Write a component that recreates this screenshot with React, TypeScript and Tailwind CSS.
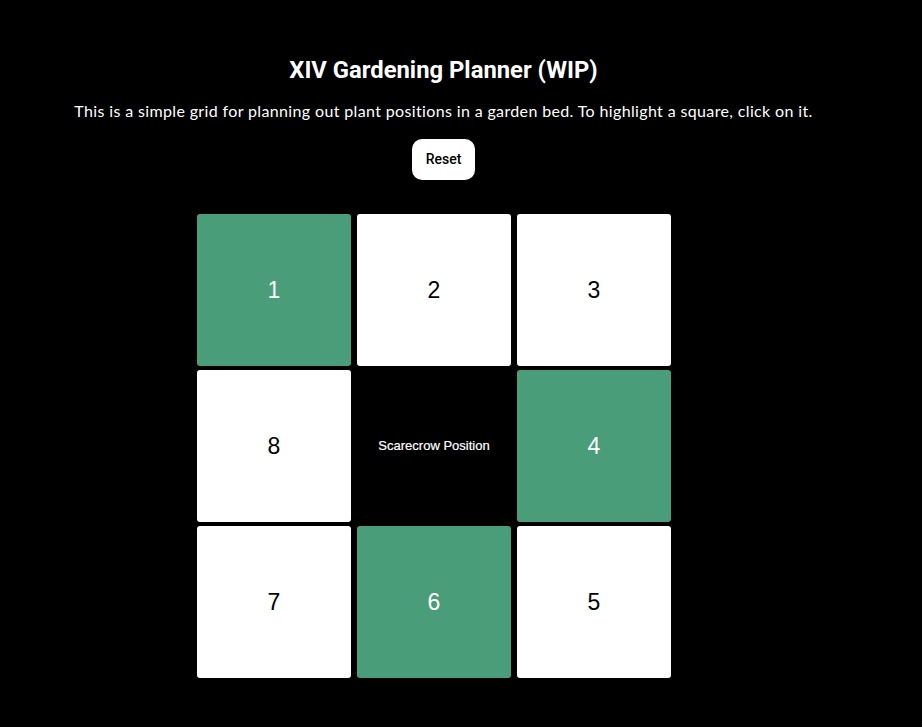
import React, { useState } from 'react';

// cell ids laid out clockwise around the scarecrow
const layout: (number | null)[] = [1, 2, 3, 8, null, 4, 7, 6, 5];
const initialOn = [1, 4, 6];

export default function App() {
  const [active, setActive] = useState<number[]>(initialOn);

  const toggle = (n: number) =>
    setActive(a => (a.includes(n) ? a.filter(x => x !== n) : [...a, n]));

  return (
    <div className="min-h-[727px] bg-black text-white">
      <div className="w-[887px] pt-[56px] text-center">
        <h1 className="text-[23.8px] leading-[28px] font-bold font-['Roboto',sans-serif]">XIV Gardening Planner (WIP)</h1>
        <p className="mt-[15px] text-[16px] leading-[24px] font-['Lato',sans-serif] tracking-[0.36px]">
          This is a simple grid for planning out plant positions in a garden bed. To highlight a square, click on it.
        </p>
        <button
          onClick={() => setActive([])}
          className="mt-[16px] w-[63px] h-[41px] bg-white text-black rounded-[10px] text-[14px] font-medium font-['Roboto',sans-serif]"
        >
          Reset
        </button>
      </div>

      <div className="ml-[197px] mt-[34px] grid grid-cols-[154px_154px_154px] grid-rows-[152px_152px_152px] gap-x-[6px] gap-y-[4px] w-[474px]">
        {layout.map((n, i) =>
          n === null ? (
            <div key={i} className="flex items-center justify-center bg-black text-[13px] font-['Liberation_Sans',Arial,sans-serif] [-webkit-text-stroke:0.2px_white]">
              Scarecrow Position
            </div>
          ) : (
            <button
              key={i}
              onClick={() => toggle(n)}
              className={`rounded-[3px] flex items-center justify-center text-[23px] font-['Liberation_Sans',Arial,sans-serif] ${
                active.includes(n) ? 'bg-[#4a9d79] text-white' : 'bg-white text-black'
              }`}
            >
              {n}
            </button>
          )
        )}
      </div>
    </div>
  );
}
